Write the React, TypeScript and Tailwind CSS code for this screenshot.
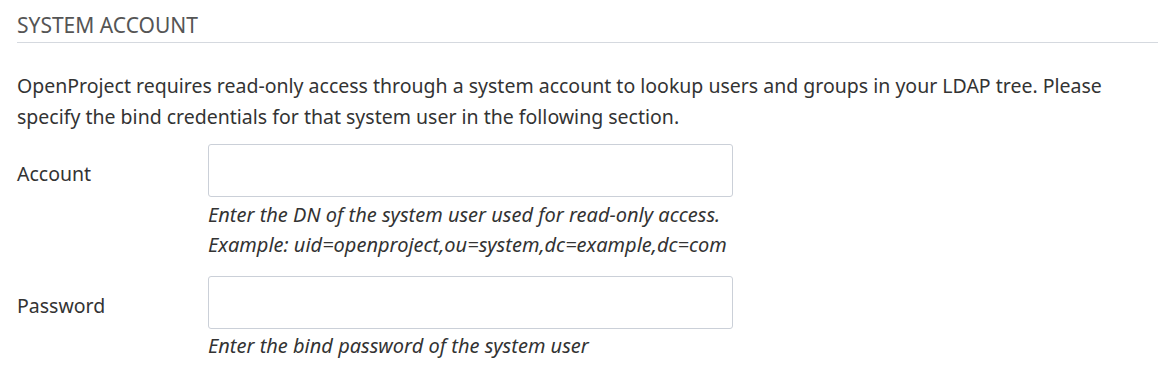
export default function App() {
  return (
    <div className="w-[1158px] h-[388px] bg-white pl-[17px] text-[#333333] font-['Noto_Sans',sans-serif] overflow-hidden">
      {/* Section header */}
      <div className="pt-[13px] pb-[5px] border-b border-[#d5d9df]">
        <h3 className="text-[21px] leading-[24px] text-[#555555] uppercase">System Account</h3>
      </div>

      <p className="mt-[27px] text-[19.5px] leading-[31px] pr-[20px]">
        OpenProject requires read-only access through a system account to lookup users and groups in your LDAP tree. Please specify the bind credentials for that system user in the following section.
      </p>

      {/* Account */}
      <div className="mt-[12px] flex">
        <label className="w-[191px] pt-[17px] text-[19.5px] leading-[26px]">Account</label>
        <div className="flex flex-col">
          <input
            type="text"
            className="w-[525px] h-[53px] border border-[#cbd0d8] rounded-[3px] bg-white"
          />
          <div className="mt-[3px] text-[20px] leading-[30px] italic">
            <div>Enter the DN of the system user used for read-only access.</div>
            <div>Example: uid=openproject,ou=system,dc=example,dc=com</div>
          </div>
        </div>
      </div>

      {/* Password */}
      <div className="mt-[16px] flex">
        <label className="w-[191px] pt-[17px] text-[19.5px] leading-[26px]">Password</label>
        <div className="flex flex-col">
          <input
            type="password"
            className="w-[525px] h-[53px] border border-[#cbd0d8] rounded-[3px] bg-white"
          />
          <div className="mt-[2px] text-[20px] leading-[30px] italic">
            Enter the bind password of the system user
          </div>
        </div>
      </div>
    </div>
  )
}
